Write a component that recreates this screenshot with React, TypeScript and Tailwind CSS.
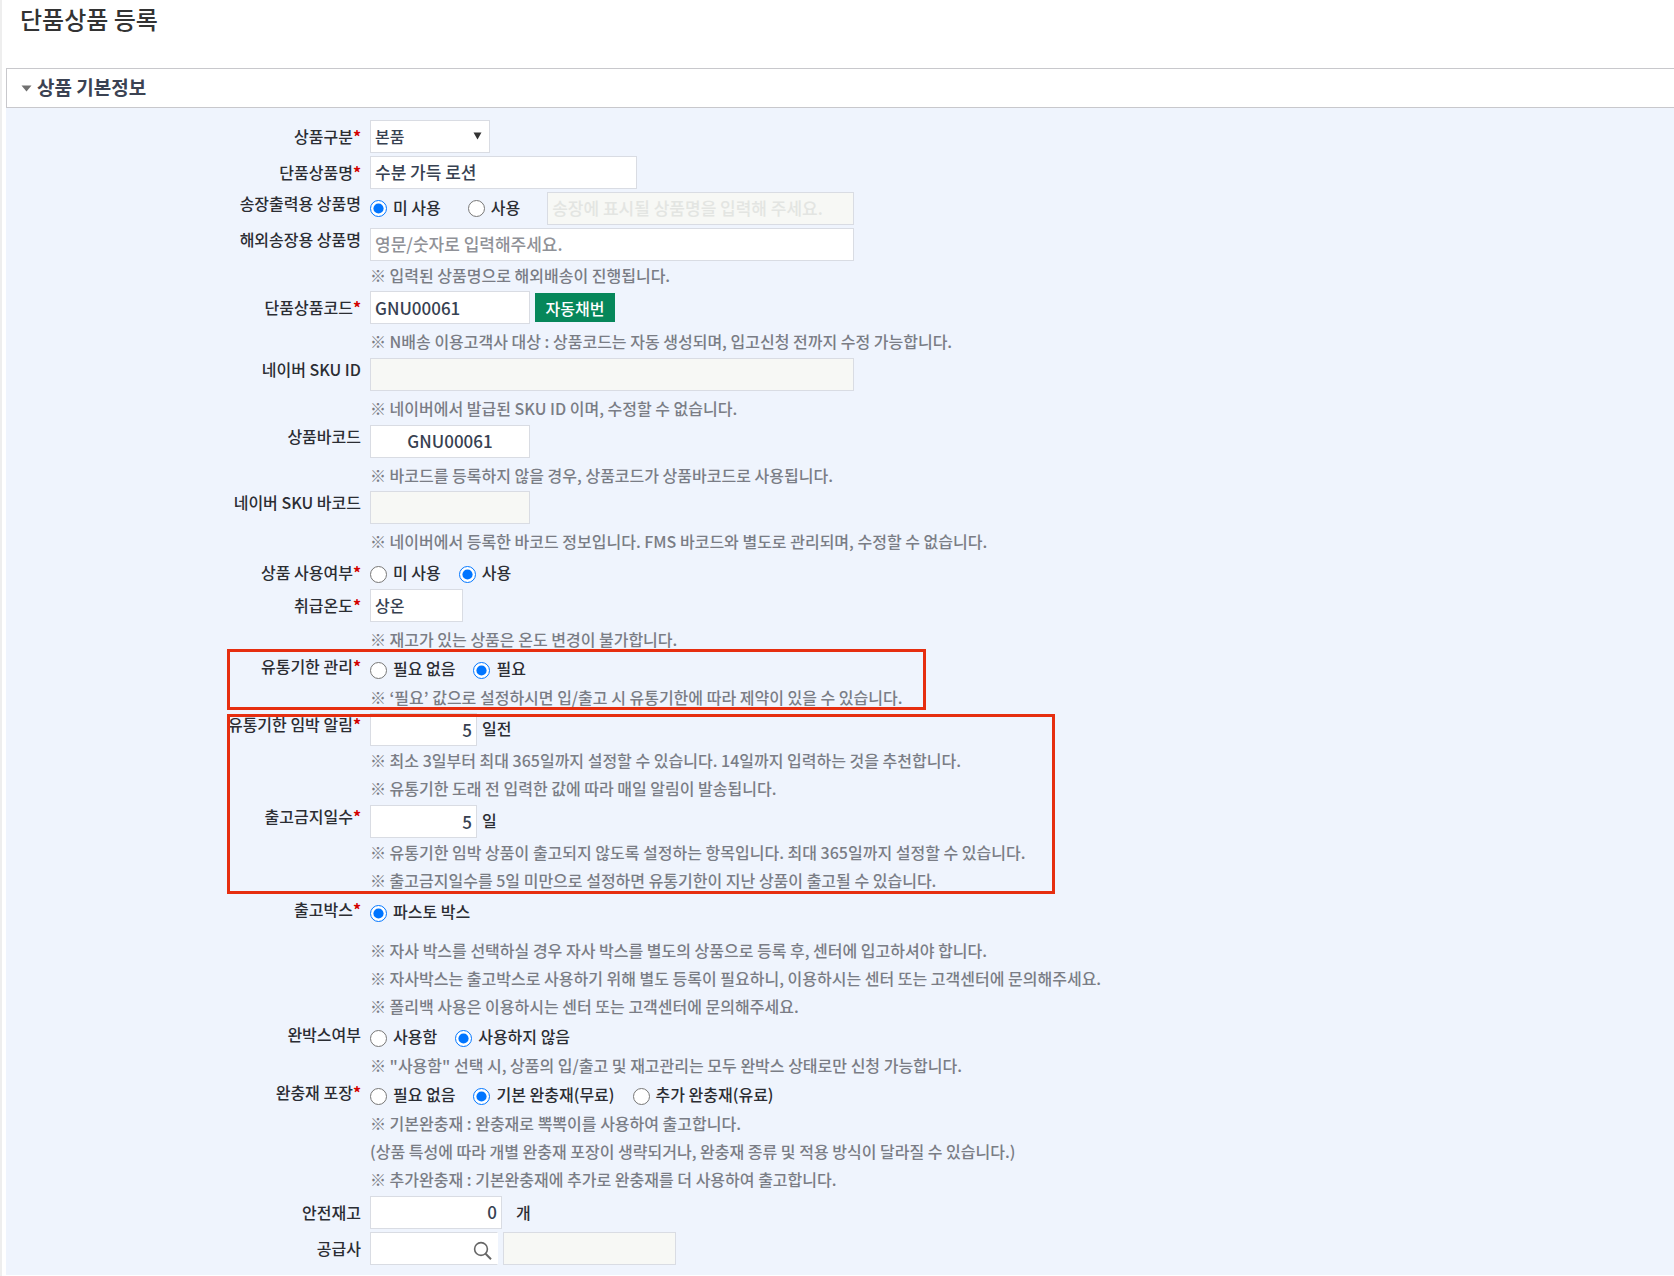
import { useState, type ReactNode } from "react";

const inputBase =
  "block h-[33px] border border-[#d9dce3] px-1 font-medium text-[#374151] outline-none";
const editable = "bg-white placeholder:text-[#8f9197] placeholder:opacity-100";
const locked = "bg-[#f7f8f5] placeholder:text-[#e3e5e2] placeholder:opacity-100";

function Label({
  text,
  htmlFor,
  required,
  middle,
}: {
  text: string;
  htmlFor?: string;
  required?: boolean;
  middle?: boolean;
}) {
  const cls = middle ? "leading-[32px]" : "leading-[22px]";
  const body = (
    <>
      {text}
      {required && <span className="font-bold text-[#d40000]">*</span>}
    </>
  );
  return (
    <div className={`w-[355px] shrink-0 text-right whitespace-nowrap ${cls}`}>
      {htmlFor ? <label htmlFor={htmlFor}>{body}</label> : <span>{body}</span>}
    </div>
  );
}

function Row({
  label,
  htmlFor,
  required,
  middle,
  className = "",
  children,
}: {
  label: string;
  htmlFor?: string;
  required?: boolean;
  middle?: boolean;
  className?: string;
  children: ReactNode;
}) {
  return (
    <div className={`flex gap-[9px] ${className}`}>
      <Label text={label} htmlFor={htmlFor} required={required} middle={middle} />
      <div className="min-w-0 flex-1">{children}</div>
    </div>
  );
}

function Notes({ lines, className = "" }: { lines: string[]; className?: string }) {
  return (
    <div className={`leading-7 text-[#7a7d85] ${className}`}>
      {lines.map((line) => (
        <p key={line}>{line}</p>
      ))}
    </div>
  );
}

function Radios({
  name,
  options,
  initial,
  className = "gap-[18px]",
  children,
}: {
  name: string;
  options: string[];
  initial: string;
  className?: string;
  children?: ReactNode;
}) {
  const [value, setValue] = useState(initial);
  return (
    <div className={`flex items-center ${className}`} role="radiogroup" aria-label={name}>
      {options.map((option) => (
        <label key={option} className="flex items-center gap-[6px] leading-[22px]">
          <input
            type="radio"
            name={name}
            checked={value === option}
            onChange={() => setValue(option)}
            className="m-0 h-[17px] w-[17px] accent-[#0075ff]"
          />
          <span className="pb-1">{option}</span>
        </label>
      ))}
      {children}
    </div>
  );
}

export default function App() {
  return (
    <div className="min-h-screen overflow-x-hidden border-l-2 border-[#eeeeee] bg-white pl-1 text-base font-medium text-[#2b2d33] [font-family:'Noto_Sans_CJK_KR','Noto_Sans',sans-serif]">
      <h1 className="h-[68px] pl-[14px] text-2xl leading-[38px] font-medium text-[#333333]">단품상품 등록</h1>

      <button
        type="button"
        className="flex h-10 w-full items-center gap-[5px] border border-r-0 border-[#c8c8cc] bg-white pl-[14px] text-left text-[19px] font-bold text-[#3b4252]"
      >
        <svg width="11" height="7" viewBox="0 0 11 7" aria-hidden="true">
          <path d="M0.5 0.5h10L5.5 6.5z" fill="#707070" />
        </svg>
        <span className="pb-[2px]">상품 기본정보</span>
      </button>

      <form className="bg-[#eff4fd] pt-3 pb-[10px]" onSubmit={(e) => e.preventDefault()}>
        <Row label="상품구분" htmlFor="kind" required middle className="mb-[3px]">
          <div className="relative w-[120px]">
            <select
              id="kind"
              className={`${inputBase} w-full appearance-none bg-white pb-[2px] text-base`}
            >
              <option>본품</option>
            </select>
            <svg
              className="pointer-events-none absolute top-3 right-2"
              width="9"
              height="8"
              viewBox="0 0 9 8"
              aria-hidden="true"
            >
              <path d="M0.5 0.5h8L4.5 7.5z" fill="#333333" />
            </svg>
          </div>
        </Row>

        <Row label="단품상품명" htmlFor="name" required middle className="mb-[3px]">
          <input
            id="name"
            defaultValue="수분 가득 로션"
            className={`${inputBase} ${editable} w-[267px] pb-[2px] text-[17px]`}
          />
        </Row>

        <Row label="송장출력용 상품명" className="mb-[3px]">
          <Radios name="송장출력용 상품명" options={["미 사용", "사용"]} initial="미 사용" className="gap-[27px]">
            <input
              disabled
              aria-label="송장 표시 상품명"
              placeholder="송장에 표시될 상품명을 입력해 주세요."
              className={`${inputBase} ${locked} w-[307px] pb-[2px] text-[17px]`}
            />
          </Radios>
        </Row>

        <Row label="해외송장용 상품명" htmlFor="overseas" className="mb-[2px]">
          <input
            id="overseas"
            placeholder="영문/숫자로 입력해주세요."
            className={`${inputBase} ${editable} w-[484px] pb-[2px] text-[17px]`}
          />
          <Notes lines={["※ 입력된 상품명으로 해외배송이 진행됩니다."]} />
        </Row>

        <Row label="단품상품코드" htmlFor="code" required middle className="mb-[3px]">
          <div className="flex items-center gap-[5px]">
            <input
              id="code"
              defaultValue="GNU00061"
              className={`${inputBase} ${editable} w-[160px] text-[17px]`}
            />
            <button type="button" className="h-[29px] w-20 bg-[#06875a] text-base font-medium text-white">
              자동채번
            </button>
          </div>
          <Notes
            className="mt-[3px]"
            lines={["※ N배송 이용고객사 대상 : 상품코드는 자동 생성되며, 입고신청 전까지 수정 가능합니다."]}
          />
        </Row>

        <Row label="네이버 SKU ID" htmlFor="sku" className="mb-[3px]">
          <input id="sku" disabled className={`${inputBase} ${locked} w-[484px] text-[17px]`} />
          <Notes className="mt-[3px]" lines={["※ 네이버에서 발급된 SKU ID 이며, 수정할 수 없습니다."]} />
        </Row>

        <Row label="상품바코드" htmlFor="barcode" className="mb-[2px]">
          <input
            id="barcode"
            defaultValue="GNU00061"
            className={`${inputBase} ${editable} w-[160px] pb-[2px] text-center text-[17px]`}
          />
          <Notes className="mt-[3px]" lines={["※ 바코드를 등록하지 않을 경우, 상품코드가 상품바코드로 사용됩니다."]} />
        </Row>

        <Row label="네이버 SKU 바코드" htmlFor="skubar" className="mb-[6px]">
          <input id="skubar" disabled className={`${inputBase} ${locked} w-[160px] text-[17px]`} />
          <Notes
            className="mt-[3px]"
            lines={["※ 네이버에서 등록한 바코드 정보입니다. FMS 바코드와 별도로 관리되며, 수정할 수 없습니다."]}
          />
        </Row>

        <Row label="상품 사용여부" required className="mb-[2px]">
          <Radios name="상품 사용여부" options={["미 사용", "사용"]} initial="사용" />
        </Row>

        <Row label="취급온도" htmlFor="temp" required middle className="mb-[2px]">
          <input
            id="temp"
            readOnly
            defaultValue="상온"
            className={`${inputBase} ${editable} w-[93px] pb-[2px] text-base`}
          />
          <Notes className="mt-[3px]" lines={["※ 재고가 있는 상품은 온도 변경이 불가합니다."]} />
        </Row>

        <div className="relative mb-[2px]">
          <Row label="유통기한 관리" required>
            <Radios name="유통기한 관리" options={["필요 없음", "필요"]} initial="필요" className="gap-[18px] pt-[2px]" />
            <Notes lines={["※ ‘필요’ 값으로 설정하시면 입/출고 시 유통기한에 따라 제약이 있을 수 있습니다."]} />
          </Row>
          <div className="pointer-events-none absolute -top-[6px] bottom-[1px] left-[221px] w-[699px] border-[3px] border-[#e62e10]" />
        </div>

        <div className="relative mb-1">
          <Row label="유통기한 임박 알림" htmlFor="alert" required className="mb-[3px]">
            <div className="flex gap-[5px]">
              <input
                id="alert"
                defaultValue="5"
                className={`${inputBase} ${editable} w-[107px] text-right text-[17px]`}
              />
              <span className="leading-[30px]">일전</span>
            </div>
            <Notes
              lines={[
                "※ 최소 3일부터 최대 365일까지 설정할 수 있습니다. 14일까지 입력하는 것을 추천합니다.",
                "※ 유통기한 도래 전 입력한 값에 따라 매일 알림이 발송됩니다.",
              ]}
            />
          </Row>
          <Row label="출고금지일수" htmlFor="block" required>
            <div className="flex gap-[5px]">
              <input
                id="block"
                defaultValue="5"
                className={`${inputBase} ${editable} w-[107px] text-right text-[17px]`}
              />
              <span className="leading-[30px]">일</span>
            </div>
            <Notes
              lines={[
                "※ 유통기한 임박 상품이 출고되지 않도록 설정하는 항목입니다. 최대 365일까지 설정할 수 있습니다.",
                "※ 출고금지일수를 5일 미만으로 설정하면 유통기한이 지난 상품이 출고될 수 있습니다.",
              ]}
            />
          </Row>
          <div className="pointer-events-none absolute top-[1px] bottom-0 left-[221px] w-[828px] border-[3px] border-[#e62e10]" />
        </div>

        <Row label="출고박스" required className="mb-[3px]">
          <Radios name="출고박스" options={["파스토 박스"]} initial="파스토 박스" className="pt-[2px]" />
          <Notes
            className="mt-[10px]"
            lines={[
              "※ 자사 박스를 선택하실 경우 자사 박스를 별도의 상품으로 등록 후, 센터에 입고하셔야 합니다.",
              "※ 자사박스는 출고박스로 사용하기 위해 별도 등록이 필요하니, 이용하시는 센터 또는 고객센터에 문의해주세요.",
              "※ 폴리백 사용은 이용하시는 센터 또는 고객센터에 문의해주세요.",
            ]}
          />
        </Row>

        <Row label="완박스여부" className="mb-[2px]">
          <Radios
            name="완박스여부"
            options={["사용함", "사용하지 않음"]}
            initial="사용하지 않음"
            className="gap-[18px] pt-[2px]"
          />
          <Notes lines={['※ "사용함" 선택 시, 상품의 입/출고 및 재고관리는 모두 완박스 상태로만 신청 가능합니다.']} />
        </Row>

        <Row label="완충재 포장" required className="mb-[3px]">
          <Radios
            name="완충재 포장"
            options={["필요 없음", "기본 완충재(무료)", "추가 완충재(유료)"]}
            initial="기본 완충재(무료)"
            className="gap-[18px] pt-[2px]"
          />
          <Notes
            lines={[
              "※ 기본완충재 : 완충재로 뽁뽁이를 사용하여 출고합니다.",
              "(상품 특성에 따라 개별 완충재 포장이 생략되거나, 완충재 종류 및 적용 방식이 달라질 수 있습니다.)",
              "※ 추가완충재 : 기본완충재에 추가로 완충재를 더 사용하여 출고합니다.",
            ]}
          />
        </Row>

        <Row label="안전재고" htmlFor="safety" middle className="mb-[3px]">
          <div className="flex gap-[14px]">
            <input
              id="safety"
              defaultValue="0"
              className={`${inputBase} ${editable} w-[132px] pb-[2px] text-right text-[17px]`}
            />
            <span className="leading-[32px]">개</span>
          </div>
        </Row>

        <Row label="공급사" htmlFor="supplier" middle>
          <div className="flex gap-[5px]">
            <div className="relative w-32">
              <input
                id="supplier"
                className={`${inputBase} ${editable} w-full border-r-white pr-7 text-[17px]`}
              />
              <button type="button" aria-label="공급사 검색" className="absolute top-[9px] right-[5px]">
                <svg width="20" height="20" viewBox="0 0 20 20" fill="none" stroke="#666666" aria-hidden="true">
                  <circle cx="8" cy="8" r="6.4" strokeWidth="1.6" />
                  <path d="M12.6 12.8l5.4 5.4" strokeWidth="2" />
                </svg>
              </button>
            </div>
            <input disabled aria-label="공급사명" className={`${inputBase} ${locked} w-[173px] text-[17px]`} />
          </div>
        </Row>
      </form>
    </div>
  );
}
